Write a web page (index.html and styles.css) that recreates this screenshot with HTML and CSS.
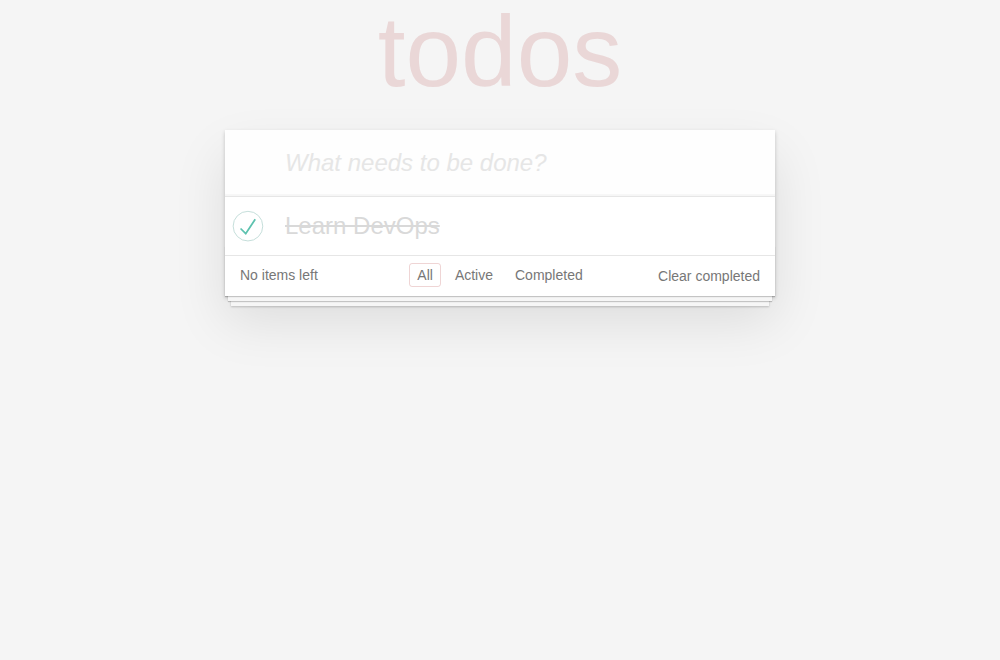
FILE: index.html
```html
<!DOCTYPE html>
<html lang="en">
<head>
<meta charset="utf-8">
<title>todos</title>
<link rel="stylesheet" href="styles.css">
</head>
<body>
<div class="page">
  <h1 class="title">todos</h1>
  <section class="todoapp">
    <header class="header">
      <input class="new-todo" placeholder="What needs to be done?">
    </header>
    <section class="main">
      <ul class="todo-list">
        <li class="todo completed">
          <span class="toggle">
            <svg width="40" height="40" viewBox="-10 -18 100 135"><circle cx="50" cy="50" r="50" fill="none" stroke="#bddad5" stroke-width="3"/><path fill="#5dc2af" d="M72 25L42 71 27 56l-4 4 20 20 34-52z"/></svg>
          </span>
          <label class="todo-label">Learn DevOps</label>
        </li>
      </ul>
    </section>
    <footer class="footer">
      <div class="footer-side footer-left"><span class="todo-count">No items left</span></div>
      <ul class="filters"><li><a class="filter selected" href="#/">All</a></li><li><a class="filter" href="#/active">Active</a></li><li><a class="filter" href="#/completed">Completed</a></li></ul>
      <div class="footer-side footer-right"><button class="clear-completed">Clear completed</button></div>
    </footer>
  </section>
</div>
</body>
</html>
```
FILE: styles.css
```css
html, body {
  margin: 0;
  padding: 0;
}
html {
  height: 100%;
}
body {
  min-height: 100%;
  font: 14px "Liberation Sans", Arial, Helvetica, sans-serif;
  line-height: 1.4em;
  background: #f5f5f5;
  color: #4d4d4d;
}
.page {
  max-width: 550px;
  margin: 0 auto;
  padding-bottom: 40px;
}
.title {
  margin: 0;
  height: 130px;
  box-sizing: border-box;
  padding-top: 1px;
  font-size: 100px;
  line-height: 100px;
  font-weight: 100;
  text-align: center;
  color: rgba(175, 47, 47, 0.15);
}
.todoapp {
  background: #fff;
  position: relative;
  box-shadow: 0 2px 4px 0 rgba(0, 0, 0, 0.2), 0 25px 50px 0 rgba(0, 0, 0, 0.1);
}
.header {
  display: flex;
}
.new-todo {
  flex: 1;
  margin: 0;
  padding: 16px 16px 16px 60px;
  border: none;
  background: rgba(0, 0, 0, 0.003);
  box-shadow: inset 0 -2px 1px rgba(0, 0, 0, 0.03);
  font-family: inherit;
  font-size: 24px;
  line-height: 1.4em;
  height: 65.6px;
  box-sizing: border-box;
  color: inherit;
  outline: none;
}
.new-todo::placeholder {
  font-style: italic;
  font-weight: 300;
  color: #e6e6e6;
}
.main {
  border-top: 1px solid #e6e6e6;
  position: relative;
  z-index: 2;
}
.todo-list {
  margin: 0;
  padding: 0;
  list-style: none;
}
.todo {
  display: flex;
  align-items: center;
  font-size: 24px;
  border-bottom: 1px solid #ededed;
}
.todo:last-child {
  border-bottom: none;
}
.toggle {
  width: 40px;
  height: 40px;
  display: block;
  flex: none;
}
.toggle svg {
  display: block;
}
.todo-label {
  flex: 1;
  padding: 15px 15px 15px 20px;
  line-height: 1.2;
  word-break: break-all;
}
.completed .todo-label {
  color: #d9d9d9;
  text-decoration: line-through;
}
.footer {
  position: relative;
  color: #777;
  padding: 10px 15px;
  height: 20px;
  border-top: 1px solid #e6e6e6;
  display: flex;
  align-items: flex-start;
}
.footer::before {
  content: "";
  position: absolute;
  right: 0;
  bottom: 0;
  left: 0;
  height: 50px;
  overflow: hidden;
  box-shadow: 0 1px 1px rgba(0, 0, 0, 0.2),
              0 8px 0 -3px #f6f6f6,
              0 9px 1px -3px rgba(0, 0, 0, 0.2),
              0 16px 0 -6px #f6f6f6,
              0 17px 2px -6px rgba(0, 0, 0, 0.2);
}
.footer-side {
  flex: 1 1 0;
  display: flex;
  position: relative;
}
.footer-right {
  justify-content: flex-end;
}
.todo-count {
  text-align: left;
}
.filters {
  margin: 0;
  padding: 0;
  list-style: none;
  position: relative;
  display: flex;
  flex: none;
}
.filters li {
  display: block;
}
.filter {
  color: inherit;
  margin: 3px;
  padding: 3px 7px;
  text-decoration: none;
  border: 1px solid transparent;
  border-radius: 3px;
}
.filter.selected {
  border-color: rgba(175, 47, 47, 0.2);
}
.clear-completed {
  position: relative;
  margin: 0;
  padding: 0;
  border: 0;
  background: none;
  font: inherit;
  color: inherit;
  line-height: 20px;
  cursor: pointer;
}
```
